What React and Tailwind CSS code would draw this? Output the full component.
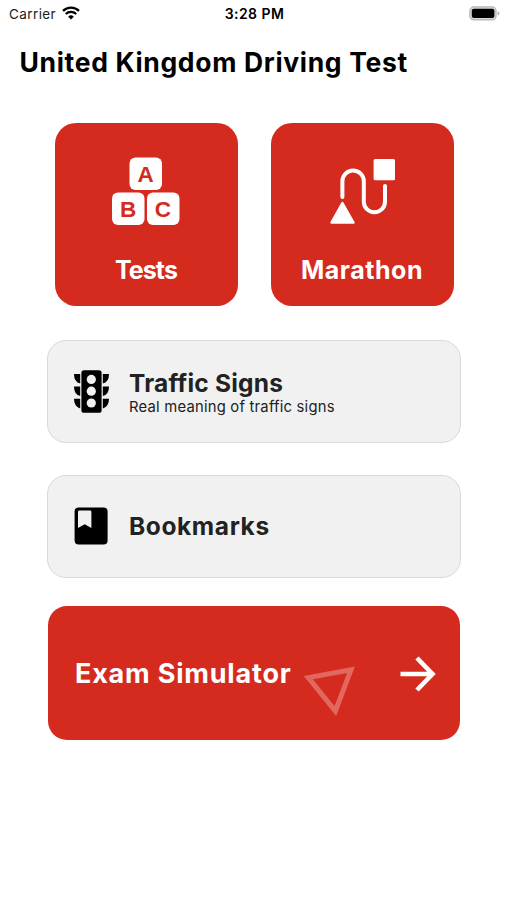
const StatusBar = () => (
  <div className="flex h-7 items-center justify-between pl-[9px] pr-[7px] text-[13.5px] text-[#222]">
    <div className="flex w-24 items-center gap-[6px]">
      <span className="w-[47px] whitespace-nowrap tracking-[0.4px]">Carrier</span>
      <svg width="18" height="14" viewBox="0 0 18 14" className="mb-[2px] shrink-0" fill="none" stroke="#000" strokeWidth="2.3">
        <path d="M1 4.8a11.5 11.5 0 0 1 16 0" />
        <path d="M3.8 8a7.5 7.5 0 0 1 10.4 0" />
        <path d="M9 13.6l-2.8-2.9a4 4 0 0 1 5.6 0z" fill="#000" stroke="none" />
      </svg>
    </div>
    <span className="mb-[2px] whitespace-nowrap text-[14px] font-semibold tracking-[0.45px] text-black">3:28 PM</span>
    <div className="flex w-24 items-center justify-end">
      <svg width="31" height="15" viewBox="0 0 31 15" className="mb-[2px]">
        <rect x="0.9" y="0.9" width="26.2" height="13" rx="4" fill="#d6d6d6" stroke="#b5b5b5" strokeWidth="1.2" />
        <rect x="2.8" y="2.7" width="22.6" height="9.4" rx="2" fill="#000" />
        <path d="M28.6 5.2q2 .6 2 2.2t-2 2.2z" fill="#b5b5b5" />
      </svg>
    </div>
  </div>
);

const BlocksIcon = () => (
  <svg
    width="68"
    height="69"
    viewBox="0 0 68 69"
    fill="#fff"
    fontFamily="Liberation Sans, sans-serif"
    fontWeight="700"
    fontSize="22.5"
    textAnchor="middle"
  >
    <rect x="17.5" y="0.5" width="32.5" height="32.5" rx="6" />
    <rect x="0" y="35.5" width="32.5" height="32.5" rx="6" />
    <rect x="35" y="35.5" width="32.5" height="32.5" rx="6" />
    <g fill="#d52b1e">
      <text x="33.7" y="25">A</text>
      <text x="16.2" y="60">B</text>
      <text x="50.8" y="60">C</text>
    </g>
  </svg>
);

const RouteIcon = () => (
  <svg width="66" height="69" viewBox="0 0 66 69" fill="#fff" className="ml-[1px]">
    <path
      d="M12.4 40V24.2a10.7 10.7 0 0 1 21.4 0v20.5a10.6 10.6 0 0 0 21.2 0V29"
      fill="none"
      stroke="#fff"
      strokeWidth="4"
      strokeLinecap="round"
    />
    <path d="M12.4 46L23.5 65.6H1.5z" stroke="#fff" strokeWidth="2.4" strokeLinejoin="round" />
    <rect x="43.6" y="2" width="21.4" height="21.2" rx="1.5" />
  </svg>
);

const TrafficIcon = () => (
  <svg width="35" height="43" viewBox="0 0 35 43">
    <g>
      <path d="M0 4H6.2V13.6Q0 12 0 4zM0 16.4H6.2V26Q0 24.4 0 16.4zM0 28.8H6.2V38.4Q0 36.8 0 28.8z" />
      <path d="M35 4H28.8V13.6Q35 12 35 4zM35 16.4H28.8V26Q35 24.4 35 16.4zM35 28.8H28.8V38.4Q35 36.8 35 28.8z" />
      <rect x="7.4" y="0.2" width="20.2" height="42.6" rx="2.6" />
    </g>
    <g fill="#f1f1f1">
      <circle cx="17.3" cy="9.4" r="4.6" />
      <circle cx="17.3" cy="21.2" r="4.6" />
      <circle cx="17.3" cy="33" r="4.6" />
    </g>
  </svg>
);

const BookIcon = () => (
  <svg width="35" height="38" viewBox="0 0 35 38" className="mb-[2px]">
    <rect x="0.6" y="0.4" width="33" height="37.2" rx="4" />
    <path d="M4 5q0-1.4 1.4-1.4H16q1.4 0 1.4 1.4V21L10.7 17.2 4 21z" fill="#f1f1f1" />
  </svg>
);

const Tile = ({ icon, children }) => (
  <div className="flex h-[183px] w-[183px] flex-col items-center rounded-[21px] bg-[#d52b1e] pt-[34px] text-white">
    {icon}
    <div className="mt-[28px] text-[25px] leading-8 font-bold whitespace-nowrap">{children}</div>
  </div>
);

const Row = ({ icon, children }) => (
  <div className="flex h-[103px] w-[414px] items-center gap-[20px] rounded-[19px] border border-[#d9d9d9] bg-[#f1f1f1] pl-[26px] text-[#222]">
    {icon}
    <div className="flex flex-col whitespace-nowrap">{children}</div>
  </div>
);

const App = () => {
  return (
    <div className="h-[900px] w-[507px] overflow-hidden bg-white font-['Inter',sans-serif]">
      <StatusBar />
      <h1 className="mt-[16px] pl-[19.5px] text-[26.5px] leading-9 font-bold tracking-[0.67px] whitespace-nowrap text-black">
        United Kingdom Driving Test
      </h1>

      <div className="mt-[43px] flex gap-[33px] pl-[54.5px]">
        <Tile icon={<BlocksIcon />}>
          <span className="tracking-[-0.9px]">Tests</span>
        </Tile>
        <Tile icon={<RouteIcon />}>
          <span className="tracking-[0.55px]">Marathon</span>
        </Tile>
      </div>

      <div className="mt-[34px] flex flex-col gap-[32px] pl-[47px]">
        <Row icon={<TrafficIcon />}>
          <span className="mt-[2px] text-[24.5px] leading-7 font-bold tracking-[0.2px]">Traffic Signs</span>
          <span className="text-[14.8px] leading-5 tracking-[0.22px]">Real meaning of traffic signs</span>
        </Row>
        <Row icon={<BookIcon />}>
          <span className="mb-[2px] text-[24.5px] leading-7 font-bold tracking-[0.6px]">Bookmarks</span>
        </Row>
      </div>

      <div className="mt-[28px] ml-[48px] flex h-[134px] w-[412px] items-center rounded-[19px] bg-[#d52b1e] pl-[27px] text-white">
        <span className="mt-[2px] w-[228px] text-[27px] font-bold tracking-[0.8px] whitespace-nowrap">Exam Simulator</span>
        <svg width="53" height="52" viewBox="0 0 53 52" className="mt-[36px]" fill="none" stroke="#e2685f" strokeWidth="5">
          <path d="M5.3 12.6L48 4.8 32.4 46z" />
        </svg>
        <svg width="36" height="36" viewBox="0 0 36 36" className="mt-[2px] ml-[44px]" fill="none" stroke="#fff" strokeWidth="4.6">
          <path d="M0.5 18H32M17 2l15.5 16L17 34" />
        </svg>
      </div>
    </div>
  );
};

export default App;
